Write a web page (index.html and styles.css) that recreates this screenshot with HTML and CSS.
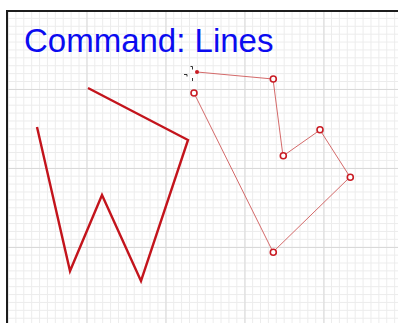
FILE: index.html
```html
<!DOCTYPE html>
<html lang="en">
<head>
  <meta charset="UTF-8">
  <meta name="viewport" content="width=device-width, initial-scale=1.0">
  <title>Command: Lines</title>
  <link rel="stylesheet" href="styles.css">
</head>
<body>
  <div class="stage">
    <h1 class="command">Command: Lines</h1>

    <svg class="drawing" viewBox="8 12 390 311" width="390" height="311">
      <!-- finished line -->
      <polyline class="done" points="88,88 188,140 141,281 102,195 70,271 37,127" />

      <!-- line being drawn -->
      <polyline class="live" points="197,72 273,79 283,156 320,130 350,177 273,252 194,93" />
      <g class="nodes">
        <circle cx="273.3" cy="79" r="3" />
        <circle cx="283.3" cy="155.7" r="3" />
        <circle cx="320" cy="129.7" r="3" />
        <circle cx="350.3" cy="177.3" r="3" />
        <circle cx="273.3" cy="252.3" r="3" />
        <circle cx="194" cy="93" r="3" />
      </g>
      <circle class="tip" cx="197" cy="72" r="2" />

      <!-- cursor -->
      <g class="cursor">
        <path d="M190.5 66.5 h2 v3" />
        <path d="M184 74.5 h3 v2" />
        <path d="M192.5 78 v3" />
      </g>
    </svg>
  </div>
</body>
</html>
```

FILE: styles.css
```css
html, body { margin: 0; padding: 0; background: #fff; overflow: hidden; }
body { width: 398px; height: 323px; }

.stage {
  position: relative;
  margin: 10px 0 0 6px;
  height: 311px;
  border-top: 2px solid #1c1c1c;
  border-left: 2px solid #1c1c1c;
  background-color: #fff;
  background-image:
    linear-gradient(90deg, #d9d9d9 1px, transparent 1px),
    linear-gradient(#d9d9d9 1px, transparent 1px),
    linear-gradient(90deg, #ececec 1px, transparent 1px),
    linear-gradient(#ececec 1px, transparent 1px);
  background-size: 79px 79px, 79px 79px, 7.9px 7.9px, 7.9px 7.9px;
  background-position: -0.5px -2px;
}

.command {
  position: relative;
  z-index: 1;
  margin: 0;
  padding: 10px 0 0 16px;
  font-family: "Liberation Sans", Arial, sans-serif;
  font-size: 33px;
  font-weight: normal;
  color: #0b0bf0;
}

.drawing { position: absolute; left: 0; top: 0; }

.done { fill: none; stroke: #c3141c; stroke-width: 2.4; stroke-linejoin: miter; }
.live { fill: none; stroke: #d46a6a; stroke-width: 1; }
.nodes circle { fill: #fff; stroke: #c91c24; stroke-width: 1.6; }
.tip { fill: #c91c24; }
.cursor path { fill: none; stroke: #333; stroke-width: 1; }
```
